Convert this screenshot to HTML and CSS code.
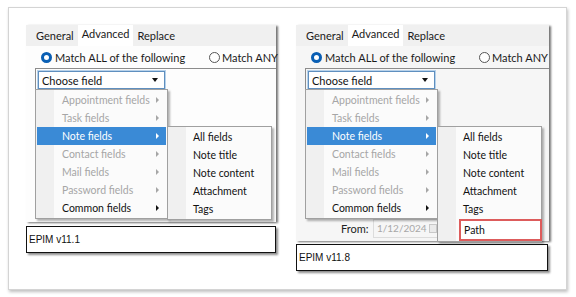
FILE: index.html
```html
<!DOCTYPE html>
<html>
<head>
<meta charset="utf-8">
<link rel="stylesheet" href="styles.css">
</head>
<body>
<div class="card">
  <div class="col col-left">
    <div class="shot shot-left">
      <div class="tabs">
        <span class="tab">General</span>
        <span class="tab tab-active">Advanced</span>
        <span class="tab">Replace</span>
      </div>
      <div class="body">
        <div class="match-row">
          <span class="radio radio-on"></span><span class="match-all">Match ALL of the following</span>
          <span class="radio"></span><span>Match ANY</span>
        </div>
        <div class="group">
          <div class="combo"><span>Choose field</span><span class="caret"></span></div>
        </div>
      </div>
      <div class="menu main-menu">
        <div class="item dis"><span>Appointment fields</span><i class="arr"></i></div>
        <div class="item dis"><span>Task fields</span><i class="arr"></i></div>
        <div class="item hi"><span>Note fields</span><i class="arr"></i></div>
        <div class="item dis"><span>Contact fields</span><i class="arr"></i></div>
        <div class="item dis"><span>Mail fields</span><i class="arr"></i></div>
        <div class="item dis"><span>Password fields</span><i class="arr"></i></div>
        <div class="item"><span>Common fields</span><i class="arr"></i></div>
      </div>
      <div class="menu sub-menu">
        <div class="item"><span>All fields</span></div>
        <div class="item"><span>Note title</span></div>
        <div class="item"><span>Note content</span></div>
        <div class="item"><span>Attachment</span></div>
        <div class="item"><span>Tags</span></div>
      </div>
    </div>
    <div class="caption caption-left">EPIM v11.1</div>
  </div>

  <div class="col col-right">
    <div class="shot shot-right">
      <div class="tabs">
        <span class="tab">General</span>
        <span class="tab tab-active">Advanced</span>
        <span class="tab">Replace</span>
      </div>
      <div class="body">
        <div class="match-row">
          <span class="radio radio-on"></span><span class="match-all">Match ALL of the following</span>
          <span class="radio"></span><span>Match ANY</span>
        </div>
        <div class="group">
          <div class="combo"><span>Choose field</span><span class="caret"></span></div>
        </div>
        <div class="from-row">
          <span class="from-label">From:</span>
          <span class="date">1/12/2024<i class="cal"></i></span>
        </div>
      </div>
      <div class="menu main-menu">
        <div class="item dis"><span>Appointment fields</span><i class="arr"></i></div>
        <div class="item dis"><span>Task fields</span><i class="arr"></i></div>
        <div class="item hi"><span>Note fields</span><i class="arr"></i></div>
        <div class="item dis"><span>Contact fields</span><i class="arr"></i></div>
        <div class="item dis"><span>Mail fields</span><i class="arr"></i></div>
        <div class="item dis"><span>Password fields</span><i class="arr"></i></div>
        <div class="item"><span>Common fields</span><i class="arr"></i></div>
      </div>
      <div class="menu sub-menu">
        <div class="item"><span>All fields</span></div>
        <div class="item"><span>Note title</span></div>
        <div class="item"><span>Note content</span></div>
        <div class="item"><span>Attachment</span></div>
        <div class="item"><span>Tags</span></div>
        <div class="item path"><span>Path</span></div>
      </div>
    </div>
    <div class="caption caption-right">EPIM v11.8</div>
  </div>
</div>
</body>
</html>
```

FILE: styles.css
```css
* { box-sizing: border-box; }
html, body { margin: 0; padding: 0; background: #ffffff; }
body {
  width: 576px; height: 297px; overflow: hidden;
  font-family: Lato, "Noto Sans", sans-serif;
  font-size: 11px; color: #111;
  white-space: nowrap;
}
.card {
  margin: 7px 0 0 8px;
  width: 559px; height: 283px;
  border: 1px solid #d4d4d4;
  box-shadow: 1px 2px 3px rgba(0,0,0,0.25);
  background: #fff;
  display: flex;
  gap: 20px;
  padding: 17px 0 0 17px;
}
.col { display: flex; flex-direction: column; }
.col-left { width: 250px; }
.col-right { width: 253px; }

.shot {
  position: relative;
  background: #fdfdfd;
  box-shadow: 2px 1px 2px rgba(0,0,0,0.55);
}
.shot-left { height: 197px; }
.shot-right { height: 216px; background: #f6f6f6; }

.tabs {
  height: 21px;
  background: #f0f0f0;
  display: flex;
  align-items: flex-end;
  padding-left: 8px;
  overflow: hidden;
}
.tab {
  height: 19px;
  line-height: 18px;
  padding: 0 2px;
  color: #1a1a1a;
}
.tab-active {
  background: #fff;
  height: 21px;
  line-height: 17px;
  padding: 0 4px;
  margin: 0 2px;
}
.body { background: #fdfdfd; }
.shot-right .body { background: #f6f6f6; height: 195px; display: flex; flex-direction: column; }

.match-row {
  height: 22px;
  display: flex;
  align-items: center;
  padding-left: 15px;
  color: #1a1a1a;
}
.radio {
  width: 11px; height: 11px;
  border-radius: 50%;
  border: 1px solid #555;
  background: #fff;
  margin-right: 2px;
  flex: none;
}
.radio-on { border: 3px solid #0a5fb4; margin-right: 3px; }
.match-all { width: 154px; flex: none; }

.group {
  margin-left: 9px;
  border-top: 1px solid #8c8c8c;
  border-left: 1px solid #8c8c8c;
  padding: 2px 0 0 2px;
  height: 40px;
}
.shot-right .group { flex: 1; }
.combo {
  width: 127px; height: 18px;
  border: 1px solid #5f8fbf;
  box-shadow: 0 0 0 1px #b8d2ea;
  background: #fff;
  display: flex; align-items: center; justify-content: space-between;
  padding: 0 6px 0 3px;
  color: #111;
}
.caret {
  width: 0; height: 0;
  border-left: 3.5px solid transparent;
  border-right: 3.5px solid transparent;
  border-top: 4px solid #111;
}

.from-row {
  height: 22px;
  display: flex;
  align-items: center;
  padding-left: 45px;
  margin-bottom: 2px;
}
.from-label { color: #222; width: 32px; }
.date {
  width: 66px; height: 19px;
  border: 1px solid #dcdcdc;
  background: #f6f6f6;
  color: #a8a8a8;
  font-size: 10px;
  display: flex; align-items: center; justify-content: space-between;
  padding: 0 1px 0 3px;
}
.cal { width: 8px; height: 9px; border: 1px solid #c8c8c8; background: #eaeaea; flex: none; }

.menu {
  position: absolute;
  background: #fbfbfb;
  border: 1px solid #a0a0a0;
  box-shadow: 2px 2px 2px rgba(0,0,0,0.3);
  padding: 1px 1px;
  background-image: linear-gradient(to right, #f0f0f0 0, #f0f0f0 18px, transparent 18px);
  font-size: 10.5px;
}
.main-menu { left: 9px; top: 64px; width: 133px; }
.sub-menu { left: 141px; top: 101px; width: 105px; }
.item {
  height: 18px;
  display: flex; align-items: center; justify-content: space-between;
  padding: 0 7px 0 25px;
  color: #111;
}
.sub-menu .item { padding-left: 24px; }
.item.dis { color: #a6a6a6; }
.item.hi { background: #3a8ad6; color: #fff; }
.arr {
  width: 0; height: 0;
  border-top: 3px solid transparent;
  border-bottom: 3px solid transparent;
  border-left: 3px solid #111;
}
.item.dis .arr { border-left-color: #a6a6a6; }
.item.hi .arr { border-left-color: #fff; }
.item.path {
  border: 2px solid #dd5c5c;
  background: #fff;
  margin: 1px -2px -1px 20px;
  height: 22px;
  padding-left: 3px;
}

.caption {
  height: 27px;
  border: 1px solid #111;
  background: #fff;
  box-shadow: 2px 2px 2px rgba(0,0,0,0.45);
  display: flex; align-items: center;
  padding-left: 2px;
  font-family: "Liberation Sans", Arial, sans-serif;
  font-size: 10px;
  color: #111;
}
.caption-left { margin-top: 4px; }
.caption-right { margin-top: 3px; width: 252px; }
```
